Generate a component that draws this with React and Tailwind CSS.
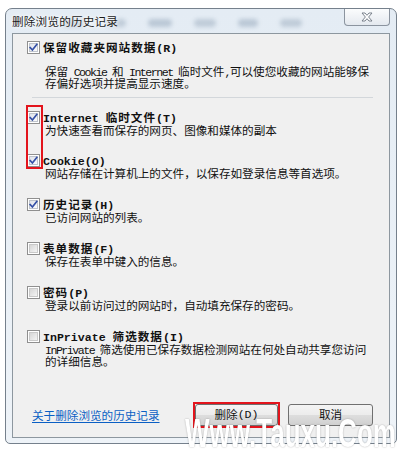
import React from "react";

function M({ children }) {
  return <span className="font-['Liberation_Mono',monospace] tracking-[-1.5px]">{children}</span>;
}

function MB({ children }) {
  return <span className="font-['Liberation_Mono',monospace] tracking-[0px]">{children}</span>;
}

function Box({ checked }) {
  return (
    <span className="relative mt-[1px] flex h-[13px] w-[13px] shrink-0 border border-[#8f8f8f] bg-white p-[1px]">
      {checked ? (
        <span className="flex-1 border border-[#bfc4cc] bg-gradient-to-br from-[#dfe3ea] to-[#fbfbfc]" />
      ) : (
        <span className="flex-1 border border-[#c9c9c9] bg-gradient-to-br from-[#d6d6d6] to-[#f4f4f4]" />
      )}
      {checked && (
        <svg className="absolute left-0 top-0" width="11" height="11" viewBox="0 0 11 11">
          <path d="M2.2 5.6 L4.4 8 L8.8 2.4" fill="none" stroke="#3550a6" strokeWidth="1.7" strokeLinecap="square" />
        </svg>
      )}
    </span>
  );
}

function Line({ children, className = "" }) {
  return <div className={"h-[12px] whitespace-nowrap leading-[12px] " + className}>{children}</div>;
}

function Label({ children }) {
  return <div className="h-[14px] whitespace-nowrap font-bold leading-[14px] tracking-[1px]">{children}</div>;
}

function Row({ checked, label, lines, className }) {
  return (
    <div className={"flex items-start " + className}>
      <Box checked={checked} />
      <div className="ml-[3px]">
        <Label>{label}</Label>
        <div className="ml-[2px]">
          {lines.map((l, i) => (
            <Line key={i}>{l}</Line>
          ))}
        </div>
      </div>
    </div>
  );
}

export default function App() {
  return (
    <div className="relative h-[454px] w-[404px] overflow-hidden bg-white font-['Noto_Sans_CJK_SC',sans-serif] text-[11.6px] text-[#111]">
      <div className="ml-[5px] mt-[8px] flex h-[436px] w-[392px] flex-col rounded-t-[7px] rounded-b-[5px] border border-[#75808c] bg-gradient-to-b from-[#e4ecf4] to-[#eef3f8] px-[6px] pb-[5px]">
        {/* title bar */}
        <div className="relative flex h-[24px] shrink-0 items-center justify-between">
          <div className="absolute left-[50px] top-[10px] flex gap-[22px] opacity-60 blur-[2px]">
            <span className="h-[8px] w-[22px] rounded bg-[#9fb0c2]" />
            <span className="h-[8px] w-[20px] rounded bg-[#a7b6c6]" />
            <span className="h-[8px] w-[24px] rounded bg-[#9fb0c2]" />
            <span className="h-[8px] w-[22px] rounded bg-[#a7b6c6]" />
            <span className="h-[8px] w-[20px] rounded bg-[#9fb0c2]" />
            <span className="h-[8px] w-[22px] rounded bg-[#a7b6c6]" />
          </div>
          <span className="relative leading-[14px] tracking-[0.2px] text-[#1b1b1b] [text-shadow:0_0_6px_#ffffff,0_0_3px_#ffffff]">
            删除浏览的历史记录
          </span>
          <div className="relative flex h-[17px] w-[46px] items-center justify-center self-start rounded-b-[4px] border border-t-0 border-[#8b949f] bg-gradient-to-b from-[#fbfcfd] to-[#e4e9ef]">
            <svg width="12" height="10" viewBox="0 0 12 10">
              <path
                d="M1 1 L4 1 L6 3.3 L8 1 L11 1 L7.6 5 L11 9 L8 9 L6 6.7 L4 9 L1 9 L4.4 5 Z"
                fill="#ffffff"
                stroke="#6e7782"
                strokeWidth="0.9"
                strokeLinejoin="round"
              />
            </svg>
          </div>
        </div>

        {/* content panel */}
        <div className="relative flex flex-1 flex-col border border-[#8d979f] bg-[#f0f0f0] pb-[9px] pl-[14px] pt-[6px]">
          <div className="flex items-start">
            <Box checked />
            <div className="ml-[3px]">
              <Label>
                保留收藏夹网站数据<MB>(R)</MB>
              </Label>
              <div className="ml-[2px] mt-[11px]">
                <Line>
                  保留<M> Cookie </M>和<M> Internet </M>临时文件<M>,</M>可以使您收藏的网站能够保
                </Line>
                <Line>存偏好选项并提高显示速度。</Line>
              </div>
            </div>
          </div>

          <div className="ml-[5px] mt-[8px] h-px w-[341px] shrink-0 bg-[#d3d7db]" />

          <Row
            className="mt-[12px]"
            checked
            label={<><MB>Internet </MB>临时文件<MB>(T)</MB></>}
            lines={["为快速查看而保存的网页、图像和媒体的副本"]}
          />
          <Row
            className="mt-[17px]"
            checked
            label={<MB>Cookie(O)</MB>}
            lines={["网站存储在计算机上的文件，以保存如登录信息等首选项。"]}
          />
          <Row
            className="mt-[18px]"
            checked
            label={<>历史记录<MB>(H)</MB></>}
            lines={["已访问网站的列表。"]}
          />
          <Row
            className="mt-[18px]"
            checked={false}
            label={<>表单数据<MB>(F)</MB></>}
            lines={["保存在表单中键入的信息。"]}
          />
          <Row
            className="mt-[18px]"
            checked={false}
            label={<>密码<MB>(P)</MB></>}
            lines={["登录以前访问过的网站时，自动填充保存的密码。"]}
          />
          <Row
            className="mt-[18px]"
            checked={false}
            label={<><MB>InPrivate </MB>筛选数据<MB>(I)</MB></>}
            lines={[
              <><M>InPrivate </M>筛选使用已保存数据检测网站在何处自动共享您访问</>,
              "的详细信息。",
            ]}
          />

          <div className="mt-auto flex items-center pl-[5px] pr-[16px]">
            <span className="h-[14px] whitespace-nowrap leading-[14px] text-[#0a5fc4] underline underline-offset-2">
              关于删除浏览的历史记录
            </span>
            <div className="ml-auto flex items-center gap-[8px]">
              <div className="border-2 border-[#e3141c]">
                <button className="flex h-[22px] w-[83px] items-center justify-center rounded-[3px] border border-[#707070] bg-[linear-gradient(#f4f4f4_0%,#ececec_50%,#dedede_50%,#d0d0d0_100%)] text-[11.6px] leading-none text-[#111]">
                  删除<MB>(D)</MB>
                </button>
              </div>
              <button className="flex h-[22px] w-[85px] items-center justify-center rounded-[3px] border border-[#707070] bg-[linear-gradient(#f4f4f4_0%,#ececec_50%,#dedede_50%,#d0d0d0_100%)] text-[11.6px] leading-none text-[#111]">
                取消
              </button>
            </div>
          </div>

          {/* red annotation around two checkboxes */}
          <div className="pointer-events-none absolute left-[13px] top-[71px] h-[64px] w-[17px] border-2 border-[#e3141c]" />
        </div>
      </div>

      {/* watermark */}
      <div className="pointer-events-none absolute left-[185px] top-[413px] origin-left scale-x-[0.65] whitespace-nowrap font-['Liberation_Sans',sans-serif] text-[40px] font-bold leading-none text-white [text-shadow:0_0_2px_rgba(0,0,0,0.35)]">
        Www.Tauxu.Com
      </div>
    </div>
  );
}
